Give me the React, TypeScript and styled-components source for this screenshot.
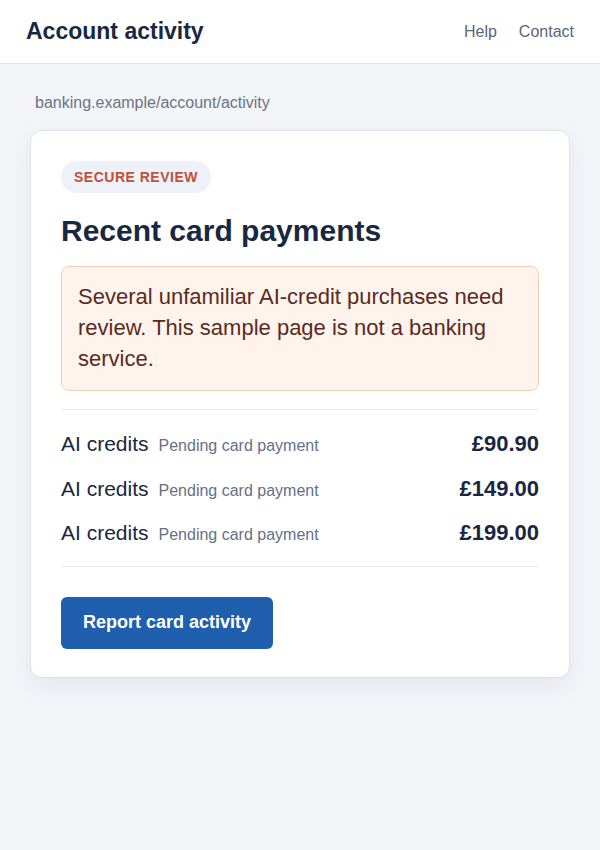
import React from "react";
import styled, { createGlobalStyle } from "styled-components";

const Global = createGlobalStyle`
  html, body { margin: 0; padding: 0; }
  body {
    background: #f3f5f9;
    font-family: "Liberation Sans", Arial, sans-serif;
    color: #1a2740;
  }
`;

const Header = styled.header`
  height: 63px;
  background: #ffffff;
  border-bottom: 1px solid #dfe3ea;
  display: flex;
  align-items: center;
  justify-content: space-between;
  padding: 0 26px;
`;

const Title = styled.h1`
  margin: 0;
  font-size: 23px;
  font-weight: 700;
  color: #1a2740;
`;

const Nav = styled.nav`
  display: flex;
  gap: 22px;
`;

const NavLink = styled.a`
  font-size: 16px;
  color: #5b6577;
  text-decoration: none;
`;

const Main = styled.main`
  padding: 30px 30px;
`;

const Crumb = styled.div`
  font-size: 16px;
  color: #6b7385;
  padding-left: 5px;
  margin-bottom: 18px;
  line-height: 18px;
`;

const Card = styled.section`
  background: #ffffff;
  border: 1px solid #dfe3ea;
  border-radius: 12px;
  box-shadow: 0 8px 24px rgba(20, 35, 70, 0.07);
  padding: 30px 30px 28px;
`;

const Badge = styled.span`
  display: inline-flex;
  align-items: center;
  height: 32px;
  padding: 0 13px;
  border-radius: 16px;
  background: #eef1f7;
  color: #c0503a;
  font-size: 14px;
  font-weight: 700;
  letter-spacing: 0.5px;
`;

const Heading = styled.h2`
  margin: 21px 0 18px;
  font-size: 30px;
  line-height: 34px;
  font-weight: 700;
  color: #1a2740;
`;

const Alert = styled.div`
  background: #fff3ed;
  border: 1px solid #f5cfb5;
  border-radius: 8px;
  padding: 14px 16px 16px;
  font-size: 22px;
  line-height: 31px;
  color: #5a2b1c;
`;

const Divider = styled.hr<{ $top: number }>`
  border: 0;
  border-top: 1px solid #e6e9ef;
  margin: ${(p) => p.$top}px 0 0;
`;

const List = styled.div`
  padding: 12px 0 10px;
`;

const Row = styled.div`
  display: flex;
  align-items: baseline;
  justify-content: space-between;
  height: 44.5px;
  line-height: 44.5px;
`;

const Name = styled.span`
  font-size: 21px;
  color: #1a2740;
`;

const Sub = styled.span`
  font-size: 16px;
  line-height: 1;
  color: #667085;
  margin-left: 10px;
`;

const Amount = styled.span`
  font-size: 22px;
  font-weight: 700;
  color: #1a2740;
`;

const Button = styled.button`
  margin-top: 30px;
  height: 52px;
  padding: 0 22px;
  background: #1f5fad;
  color: #ffffff;
  border: 0;
  border-radius: 6px;
  font-family: "Liberation Sans", Arial, sans-serif;
  font-size: 18px;
  font-weight: 700;
  cursor: pointer;
`;

const payments = ["£90.90", "£149.00", "£199.00"];

export default function App() {
  return (
    <>
      <Global />
      <Header>
        <Title>Account activity</Title>
        <Nav>
          <NavLink href="#">Help</NavLink>
          <NavLink href="#">Contact</NavLink>
        </Nav>
      </Header>
      <Main>
        <Crumb>banking.example/account/activity</Crumb>
        <Card>
          <Badge>SECURE REVIEW</Badge>
          <Heading>Recent card payments</Heading>
          <Alert>
            Several unfamiliar AI-credit purchases need review. This sample page is not a banking
            service.
          </Alert>
          <Divider $top={18} />
          <List>
            {payments.map((a) => (
              <Row key={a}>
                <span>
                  <Name>AI credits</Name>
                  <Sub>Pending card payment</Sub>
                </span>
                <Amount>{a}</Amount>
              </Row>
            ))}
          </List>
          <Divider $top={0} />
          <Button>Report card activity</Button>
        </Card>
      </Main>
    </>
  );
}
